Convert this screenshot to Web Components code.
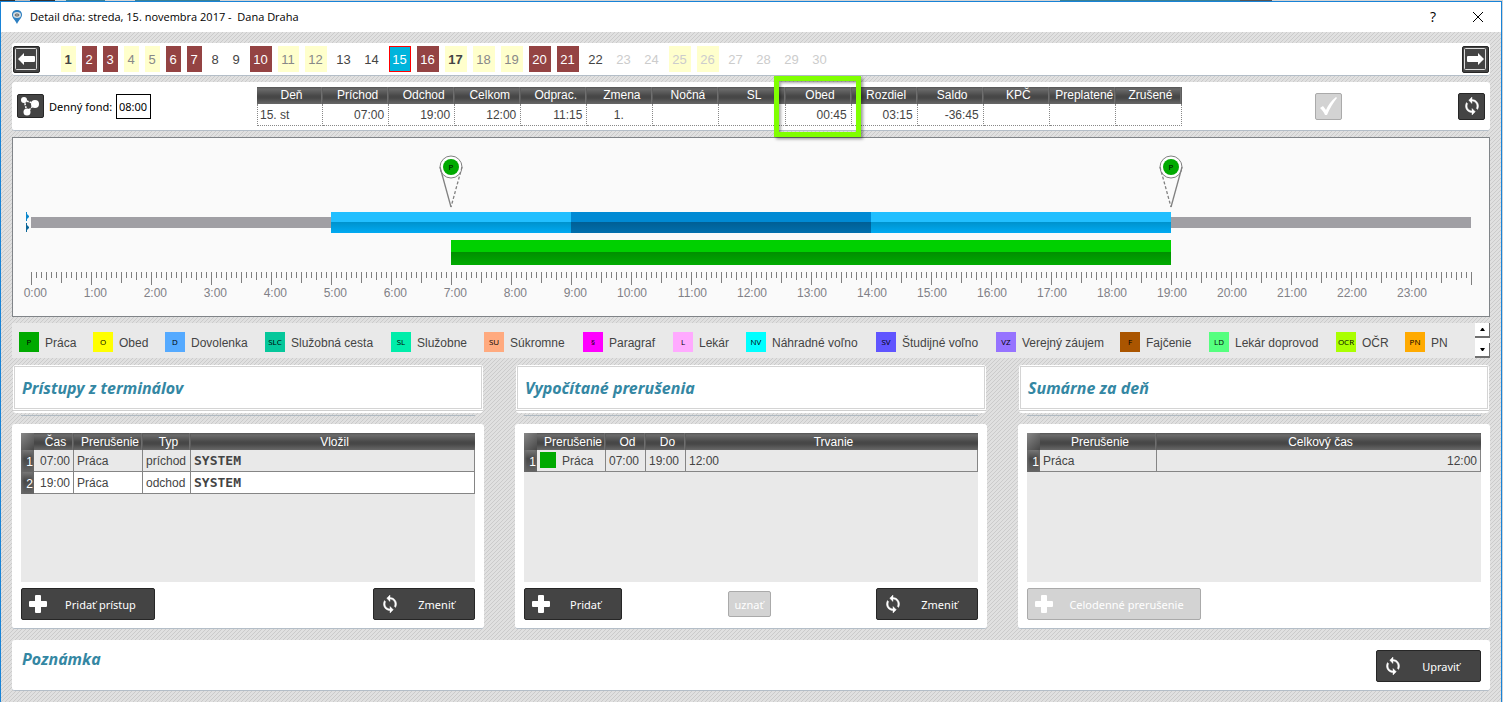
<!DOCTYPE html>
<html lang="sk">
<head>
<meta charset="utf-8">
<title>Detail dňa</title>
<style>
html, body { margin: 0; min-height: 100%; }
body {
  font: 12px/16px "Liberation Sans", Arial, sans-serif;
  color: #444;
  background: #d4d4d4;
}
</style>
</head>
<body>
<app-window caption="Detail dňa: streda, 15. novembra 2017 -&nbsp; Dana Draha">
  <day-strip></day-strip>
  <day-summary></day-summary>
  <time-line></time-line>
  <legend-bar></legend-bar>
  <section-columns>
    <data-section caption="Prístupy z terminálov" grid="access">
      <tool-button icon="plus" width="134">Pridať prístup</tool-button>
      <tool-button icon="sync" width="102">Zmeniť</tool-button>
    </data-section>
    <data-section caption="Vypočítané prerušenia" grid="breaks">
      <tool-button icon="plus" width="98">Pridať</tool-button>
      <tool-button class="small" width="43" disabled>uznať</tool-button>
      <tool-button icon="sync" width="102">Zmeniť</tool-button>
    </data-section>
    <data-section caption="Sumárne za deň" grid="totals">
      <tool-button icon="plus" width="174" disabled>Celodenné prerušenie</tool-button>
    </data-section>
  </section-columns>
  <note-panel caption="Poznámka">
    <tool-button icon="sync" width="105">Upraviť</tool-button>
  </note-panel>
</app-window>

<script>
const ICONS = {
  plus: '<svg width="18" height="18" viewBox="0 0 18 18"><path fill="currentColor" d="M7 0h4q1 0 1 1v5h5q1 0 1 1v4q0 1-1 1h-5v5q0 1-1 1H7q-1 0-1-1v-5H1q-1 0-1-1V7q0-1 1-1h5V1q0-1 1-1z"/></svg>',
  sync: '<svg width="18" height="18" viewBox="1 1 22 22"><path fill="currentColor" stroke="currentColor" stroke-width=".5" d="M12 4V1L8 5l4 4V6c3.31 0 6 2.69 6 6 0 1.010-.25 1.970-.7 2.800l1.460 1.460C19.540 15.030 20 13.570 20 12c0-4.420-3.580-8-8-8zm0 14c-3.310 0-6-2.690-6-6 0-1.010.25-1.970.7-2.800L5.240 7.740C4.460 8.970 4 10.430 4 12c0 4.420 3.580 8 8 8v3l4-4-4-4v3z"/></svg>',
  left: '<svg width="25" height="25" viewBox="0 0 25 25"><rect x="1.500" y="1.500" width="21" height="21" rx="1" fill="none" stroke="#ddd"/><path fill="#fff" d="M4 12l6-6v3h10q1 0 1 1v4q0 1-1 1H10v3z"/></svg>',
  right: '<svg width="25" height="25" viewBox="0 0 25 25"><rect x="1.500" y="1.500" width="21" height="21" rx="1" fill="none" stroke="#ddd"/><path fill="#fff" d="M21 12l-6-6v3H5q-1 0-1 1v4q0 1 1 1h10v3z"/></svg>',
  nodes: '<svg width="25" height="22" viewBox="0 0 25 22"><g fill="#fff"><circle cx="6" cy="5" r="3"/><circle cx="17" cy="9" r="4"/><circle cx="9" cy="17" r="3.500"/></g><path d="M6 5L17 9L9 17z" fill="none" stroke="#fff" stroke-width="1.500" stroke-dasharray="2 1"/></svg>',
  check: '<svg width="25" height="25" viewBox="0 0 25 25"><path fill="#fff" d="M4 14l3-2 3 4C12 11 15 7 20 3l1 1c-4 5-7 10-10 17H9C8 18 6 16 4 14z"/></svg>'
};

const HEAD = 'linear-gradient(#555 0, #6b6b6b 2px, #474747 9px, #474747 11px, #686868 100%)';
const UI = '"Noto Sans", "Open Sans", sans-serif';

function element(name, render) {
  customElements.define(name, class extends HTMLElement {
    connectedCallback() {
      if (this.shadowRoot) return;
      this.attachShadow({ mode: 'open' }).innerHTML = render(this);
    }
  });
}

element('app-window', el => `
<style>
:host {
  display: block; min-height: 100vh; box-sizing: border-box; padding: 1px 1px 0 0;
  background: linear-gradient(90deg, #333 0 15px, #bbb 15px 30px, #333 30px 55px, #c8d4d8 55px 66px, #3b8196 66px 105px, #d4d4d4 105px 135px, #3b8196 135px 220px, #d4d4d4 220px 1060px, #3b8196 1060px 1240px, #555 1240px 1272px, #d4d4d4 1272px) 0 0 / 100% 1px no-repeat, #d0d4d8;
}
.frame {
  min-height: calc(100vh - 1px); box-sizing: border-box; display: flex; flex-direction: column;
  border: 1px solid #1883d7; border-bottom: 0;
  background: linear-gradient(135deg, #e0e0e0 0 44%, #cbcbcb 44% 56%, #e0e0e0 56% 100%) 0 0 / 4px 4px;
}
header {
  height: 30px; display: flex; align-items: center; padding: 0 17px 0 9px; background: #fff; color: #000;
  font: 11px/16px "Open Sans", "Noto Sans", sans-serif;
}
h1 { font: inherit; margin: 0 auto 0 6px; }
header button { border: 0; padding: 0; margin: 0; background: none; color: #000; font: 14px/16px "Open Sans", sans-serif; width: 12px; height: 16px; }
header button + button { margin-left: 33px; display: flex; align-items: center; }
main { padding: 11px; display: flex; flex-direction: column; gap: 6px; }
</style>
<div class="frame">
  <header>
    <svg width="14" height="14" viewBox="0 0 14 14"><path fill="#2d7fc1" d="M7 0C3.500 0 2 2.200 2 4.800 2 8 5.500 10.500 7 14c1.500-3.500 5-6 5-9.200C12 2.200 10.500 0 7 0z"/><ellipse cx="7" cy="5" rx="4" ry="3" fill="#d6dde2"/><ellipse cx="7" cy="5" rx="2" ry="1" fill="none" stroke="#555"/></svg>
    <h1>${el.getAttribute('caption')}</h1>
    <button aria-label="Pomocník">?</button>
    <button aria-label="Zavrieť"><svg width="12" height="12" viewBox="0 0 12 12"><path d="M1 1l10 10M11 1L1 11" stroke="#000" fill="none"/></svg></button>
  </header>
  <main><slot></slot></main>
</div>`);

element('tool-button', el => `
<style>
:host { display: block; flex: none; }
button {
  display: flex; align-items: center; box-sizing: border-box; width: ${el.getAttribute('width') || 27}px; height: 32px; margin: 0; padding: 0 0 0 7px;
  border: 1px solid #262626; border-radius: 2px; background: #444; color: #fff; font: 11px/16px ${UI};
}
button:disabled { background: #d3d3d3; border-color: #aaa; color: #fff; }
span { flex: 1; padding-top: 2px; white-space: nowrap; text-align: center; }
svg { display: block; flex: none; }
:host(.small) button { height: 26px; padding: 0; }
:host(.square) button { height: 27px; padding: 0; justify-content: center; }
:host(.low) button { height: 24px; }
</style>
<button ${el.hasAttribute('disabled') ? 'disabled' : ''} ${el.title ? `aria-label="${el.title}"` : ''}>${ICONS[el.getAttribute('icon')] || ''}${el.classList.contains('square') ? '' : '<span><slot></slot></span>'}</button>`);

const DAY_STYLE = { 1: 'free bold', 2: 'bad', 3: 'bad', 4: 'free', 5: 'free', 6: 'bad', 7: 'bad', 10: 'bad', 11: 'free slim', 12: 'free', 15: 'now', 16: 'bad', 17: 'free bold', 18: 'free', 19: 'free', 20: 'bad', 21: 'bad', 23: 'next', 24: 'next', 25: 'free next', 26: 'free next', 27: 'next', 28: 'next', 29: 'next', 30: 'next' };

element('day-strip', () => `
<style>
:host { display: flex; align-items: center; height: 32px; padding: 0 1px; background: #fff; border-bottom: 1px solid #b4bec8; border-radius: 3px; }
nav { flex: 1; display: flex; gap: 6px; margin-left: 21px; }
a {
  box-sizing: border-box; width: 22px; height: 26px; padding-right: 1px; border: 1px solid transparent; text-align: center;
  font-size: 13px; line-height: 26px; color: #444; text-decoration: none;
}
a.one { width: 15px; }
a.slim { width: 21px; }
.free { background: #ffc; color: #888; }
.bad { background: #944343; color: #fff; }
.now { background: #00b4dc; border-color: #f00; color: #fff; }
.bold { font-weight: bold; color: #444; }
.next { color: #ccc; }
</style>
<tool-button class="square" icon="left" title="Predchádzajúci deň"></tool-button>
<nav>${Array.from({ length: 30 }, (_, i) => `<a href="#" class="${i < 9 ? 'one ' : ''}${DAY_STYLE[i + 1] || ''}">${i + 1}</a>`).join('')}</nav>
<tool-button class="square" icon="right" title="Nasledujúci deň"></tool-button>`);

const SUMMARY = [['Deň', '15. st', 'l'], ['Príchod', '07:00'], ['Odchod', '19:00'], ['Celkom', '12:00'], ['Odprac.', '11:15'], ['Zmena', '1.', 'c'], ['Nočná', ''], ['SL', ''], ['Obed', '00:45', '', 'mark'], ['Rozdiel', '03:15'], ['Saldo', '-36:45'], ['KPČ', ''], ['Preplatené', ''], ['Zrušené', '']];

element('day-summary', () => `
<style>
:host { display: flex; height: 48px; padding: 0 5px; background: #fff; border-bottom: 1px solid #b4bec8; border-radius: 3px; align-items: center; }
.a { flex: 106; } .b { flex: 133; } .c { flex: 116; }
label { margin: 0 6px 0 5px; padding-top: 2px; width: 61px; color: #000; font: 11px/16px ${UI}; white-space: nowrap; }
input { box-sizing: border-box; width: 35px; height: 25px; margin: 0; padding: 0 2px; border: 1px solid #000; background: #fff; color: #000; font: 11px/16px ${UI}; }
table { table-layout: fixed; border-collapse: separate; border-spacing: 0; width: 925px; }
th { position: relative; height: 17px; padding: 0 0 0 3px; font-weight: normal; line-height: 17px; color: #fff; background: linear-gradient(90deg, #777, #555) right / 2px 100% no-repeat, ${HEAD}; }
td { height: 19px; box-sizing: content-box; padding: 2px 4px 0 2px; line-height: 18px; text-align: right; border: 0 dotted #888; border-width: 0 1px 1px 0; }
td:first-child { border-left-width: 1px; }
.l { text-align: left; } .c { text-align: center; }
.mark::after { content: ""; position: absolute; z-index: 2; left: -12px; top: -11px; width: 77px; height: 51px; border: 5px solid #80ff00; box-shadow: 2px 2px 3px #0006, inset 2px 2px 3px #0005; }
</style>
<tool-button class="square low" icon="nodes" title="Väzby"></tool-button>
<label for="fund">Denný fond:</label><input id="fund" value="08:00">
<div class="a"></div>
<table>
<thead><tr>${SUMMARY.map(c => `<th class="${c[3] || ''}">${c[0]}</th>`).join('')}</tr></thead>
<tbody><tr>${SUMMARY.map(c => `<td class="${c[2] || ''}">${c[1]}</td>`).join('')}</tr></tbody>
</table>
<div class="b"></div>
<tool-button class="square" icon="check" title="Potvrdiť" disabled></tool-button>
<div class="c"></div>
<tool-button class="square" icon="sync" title="Obnoviť"></tool-button>`);

const pin = (hour, flip) => `
<svg class="pin" style="--h:${hour}" width="26" height="54" viewBox="0 0 26 54">
  <g fill="none" stroke="#808080">
    <circle cx="13" cy="12" r="11" fill="#fff"/>
    <path d="M2 12L13 52" stroke-width="1.300" ${flip ? 'stroke-dasharray="3 2"' : ''}/>
    <path d="M24 12L13 52" stroke-width="1.300" ${flip ? '' : 'stroke-dasharray="3 2"'}/>
  </g>
  <circle cx="13" cy="12" r="8" fill="#0a0"/>
  <text x="13" y="15" text-anchor="middle" font-size="8" font-family="Open Sans" fill="#000">P</text>
</svg>`;

/* One mark every five minutes: taller on the quarter, half and full hour. */
const marks = Array.from({ length: 289 }, (_, i) =>
  `M${i * 5} 0h1v${i % 12 === 0 ? 13 : i % 6 === 0 ? 11 : i % 3 === 0 ? 8 : 6}h-1z`).join('');

element('time-line', () => `
<style>
:host { display: block; box-sizing: border-box; height: 180px; padding: 17px 18px 0 13px; border: 1px solid #808488; background: #fafafa; }
.pins { position: relative; height: 57px; margin-left: 5px; }
.pin { position: absolute; top: 0; left: calc(100% * var(--h) / 24 - 13px); }
.plan { display: flex; height: 21px; align-items: center; }
.plan svg { flex: none; }
.plan i { height: 11px; background: #a09fa4; }
.plan b { height: 21px; background: linear-gradient(#22bfff 0 10px, #0092cc 10px, #00aaf2 100%); }
.plan b.core { background: linear-gradient(#008ad4 0 10px, #005f94 10px, #006fae 100%); }
.work { display: flex; height: 25px; margin: 7px 0 7px 5px; }
.work b { background: linear-gradient(#00d000 0 12px, #008f00 12px, #0a0 100%); }
.ruler { margin: 0 -1px 0 5px; }
.ruler svg { display: block; width: 100%; height: 13px; }
.hours { display: flex; margin: 0 0 0 5px; color: #808086; }
.hours div { flex: 1; }
.hours span { display: block; width: 33px; margin-left: -17px; text-align: right; }
</style>
<div class="pins">${pin(7, false)}${pin(19, true)}</div>
<div class="plan">
  <svg width="5" height="21" viewBox="0 0 5 21"><path fill="#0a87cc" d="M0 0h1v2l2 2v1L1 7v2H0z"/><path fill="#0a6496" d="M0 11h1v2l2 2v1l-2 2v2H0z"/></svg>
  <i style="flex:5"></i><b style="flex:4"></b><b class="core" style="flex:5"></b><b style="flex:5"></b><i style="flex:5"></i>
</div>
<div class="work"><span style="flex:7"></span><b style="flex:12"></b><span style="flex:5"></span></div>
<div class="ruler"><svg viewBox="0 0 1441 13" preserveAspectRatio="none" shape-rendering="crispEdges"><path fill="#7f7f7f" d="${marks}"/></svg></div>
<div class="hours">${Array.from({ length: 24 }, (_, h) => `<div><span>${h}:00</span></div>`).join('')}</div>`);

const LEGEND = [['P', 'Práca', '#0a0', 74], ['O', 'Obed', '#ff0', 72], ['D', 'Dovolenka', '#5af', 100], ['SLC', 'Služobná cesta', '#05c79b', 126], ['SL', 'Služobne', '#00edaa', 93], ['SU', 'Súkromne', '#ffaa7f', 99], ['§', 'Paragraf', '#f0f', 90], ['L', 'Lekár', '#faf', 73], ['NV', 'Náhradné voľno', '#0ff', 130], ['SV', 'Študijné voľno', '#6055ff', 120], ['VZ', 'Verejný záujem', '#9673ff', 124], ['F', 'Fajčenie', '#a50', 89], ['LD', 'Lekár doprovod', '#55ff7f', 127], ['OCR', 'OČR', '#af0', 69], ['PN', 'PN', '#fa0', 70]];

element('legend-bar', () => `
<style>
:host { display: flex; height: 35px; background: #e9e9e9; margin-bottom: 1px; }
ul { flex: 1; list-style: none; margin: 0; padding: 3px 0 0 7px; display: grid; align-items: center; grid-template-columns: ${LEGEND.map(l => l[3] + 'fr').join(' ')}; }
li { display: flex; align-items: center; gap: 6px; white-space: nowrap; line-height: 18px; }
li span { padding-top: 2px; }
i { width: 20px; height: 20px; font: 8px/20px "Open Sans", sans-serif; color: #000; text-align: center; }
.scroll { width: 15px; display: flex; flex-direction: column; justify-content: space-between; background: #fff; }
.scroll button { box-sizing: border-box; height: 15px; margin: 0; padding: 0; border: solid #707070; border-width: 0 1px 2px 0; background: #fff; display: flex; align-items: center; justify-content: center; }
</style>
<ul>${LEGEND.map(l => `<li><i style="background:${l[2]}">${l[0]}</i><span>${l[1]}</span></li>`).join('')}</ul>
<div class="scroll">
  <button aria-label="Hore"><svg width="5" height="3" viewBox="0 0 5 3"><path d="M2 0h1l2 3H0z"/></svg></button>
  <button aria-label="Dole"><svg width="5" height="3" viewBox="0 0 5 3"><path d="M0 0h5L3 3H2z"/></svg></button>
</div>`);

element('section-columns', () => `
<style>:host { display: grid; grid-template-columns: repeat(3, 1fr); gap: 31px; margin-bottom: 5px; }</style>
<slot></slot>`);

element('section-title', () => `
<style>
:host { display: block; color: #3487a3; }
h2 { margin: 0; font: italic bold 16px/18px ${UI}; }
</style>
<h2><slot></slot></h2>`);

const GRIDS = {
  access: { cols: [['Čas', 40, 'r'], ['Prerušenie', 69], ['Typ', 48], ['Vložil', 0]], rows: [['07:00', 'Práca', 'príchod', '<strong>SYSTEM</strong>'], ['19:00', 'Práca', 'odchod', '<strong>SYSTEM</strong>']] },
  breaks: { cols: [['Prerušenie', 69], ['Od', 40], ['Do', 40], ['Trvanie', 0]], rows: [['<i></i>Práca', '07:00', '19:00', '12:00']] },
  totals: { cols: [['Prerušenie', 117], ['Celkový čas', 0, 'r']], rows: [['Práca', '12:00']] }
};

element('data-grid', el => {
  const g = GRIDS[el.getAttribute('name')];
  return `
<style>
:host { display: block; height: 149px; background: #e9e9e9; }
table { width: 100%; table-layout: fixed; border-collapse: separate; border-spacing: 0; }
th { height: 17px; padding: 1px 0 0 3px; box-sizing: border-box; line-height: 16px; font-weight: normal; color: #fff; background: linear-gradient(90deg, #777, #555) right / 2px 100% no-repeat, ${HEAD}; }
thead th:first-child { background: linear-gradient(135deg, #888, #474747); }
thead th:last-child { background: ${HEAD}; }
tbody th { height: 22px; padding: 2px 1px 0 0; text-align: right; background: linear-gradient(90deg, #6b6b6b, #0000 3px, #0000 10px, #666), linear-gradient(#777, #474747 40%, #666); }
td { box-sizing: border-box; height: 22px; padding: 0 3px; line-height: 20px; white-space: nowrap; border: 0 solid #858585; border-width: 0 1px 1px 0; background: #e9e9e9; }
tr:nth-child(even) td { background: #fff; }
.r { text-align: right; }
strong { font: bold 13px/20px "DejaVu Sans Mono", monospace; }
i { display: inline-block; vertical-align: middle; width: 16px; height: 16px; margin: 0 6px 2px 0; background: #0a0; }
</style>
<table>
<colgroup><col style="width:13px">${g.cols.map(c => `<col${c[1] ? ` style="width:${c[1]}px"` : ''}>`).join('')}</colgroup>
<thead><tr><th></th>${g.cols.map(c => `<th>${c[0]}</th>`).join('')}</tr></thead>
<tbody>${g.rows.map((r, n) => `<tr><th>${n + 1}</th>${r.map((v, i) => `<td class="${g.cols[i][2] || ''}">${v}</td>`).join('')}</tr>`).join('')}</tbody>
</table>`;
});

element('data-section', el => `
<style>
:host { display: block; min-width: 0; }
.title { position: relative; margin: 0 1px 11px; height: 48px; box-sizing: border-box; padding: 1px 1px 5px; background: linear-gradient(#cfcfcf, #cfcfcf) 0 45px / 100% 1px no-repeat, #fff; border-radius: 3px; }
.title::after { content: ""; position: absolute; left: 8px; right: 8px; bottom: -3px; height: 1px; background: #b0bac2; }
.inner { box-sizing: border-box; height: 43px; border: 1px solid #d4d4d4; padding: 12px 7px 0; }
.panel { background: #fff; border-bottom: 1px solid #b4bec8; border-radius: 3px; padding: 9px 9px 8px; }
.actions { display: flex; align-items: center; justify-content: space-between; margin-top: 6px; }
</style>
<div class="title"><div class="inner"><section-title>${el.getAttribute('caption')}</section-title></div></div>
<div class="panel">
  <data-grid name="${el.getAttribute('grid')}"></data-grid>
  <div class="actions"><slot></slot></div>
</div>`);

element('note-panel', el => `
<style>
:host { display: flex; box-sizing: border-box; height: 51px; padding: 10px 9px 0 10px; justify-content: space-between; align-items: flex-start; background: #fff; border-bottom: 1px solid #b4bec8; border-radius: 3px; }
</style>
<section-title>${el.getAttribute('caption')}</section-title>
<slot></slot>`);
</script>
</body>
</html>
